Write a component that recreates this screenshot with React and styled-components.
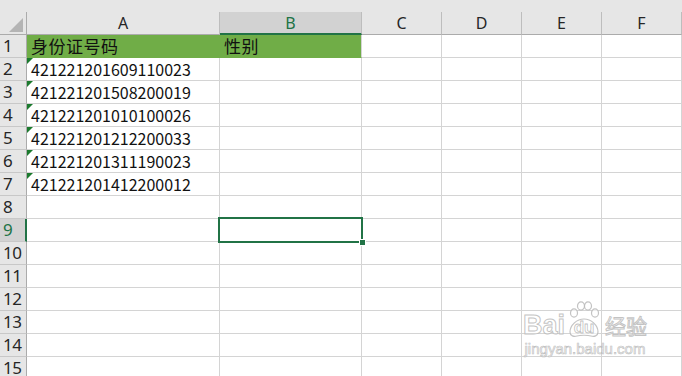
import React from "react";
import styled, { createGlobalStyle } from "styled-components";

const Global = createGlobalStyle`
  html, body { margin: 0; padding: 0; background: #fff; overflow: hidden; }
  * { box-sizing: border-box; }
`;

const COLS = [193, 142, 80, 80, 80, 80];
const LETTERS = ["A", "B", "C", "D", "E", "F"];

const Sheet = styled.div`
  position: relative;
  width: 682px;
  height: 376px;
  overflow: hidden;
  background: #fff;
  font-family: "Noto Sans CJK SC", "Noto Sans", sans-serif;
`;

const TopStrip = styled.div`
  height: 12px;
  background: #e6e6e6;
`;

const Grid = styled.div`
  display: grid;
  grid-template-columns: 27px ${COLS.map((c) => c + "px").join(" ")};
  grid-auto-rows: 23px;
`;

const Corner = styled.div`
  background: #e6e6e6;
  border-right: 1px solid #ababab;
  border-bottom: 1px solid #ababab;
  display: flex;
  align-items: flex-end;
  justify-content: flex-end;
  padding: 0 3px 2px 0;
`;

const ColHead = styled.div`
  background: ${(p) => (p.$active ? "#d2d2d2" : "#e6e6e6")};
  border-right: 1px solid #bdbdbd;
  border-bottom: ${(p) => (p.$active ? "2px solid #217346" : "1px solid #ababab")};
  color: ${(p) => (p.$active ? "#217346" : "#262626")};
  font-family: "Noto Sans", sans-serif;
  font-size: 16px;
  display: flex;
  align-items: center;
  justify-content: center;
  padding-top: ${(p) => (p.$active ? "1px" : "0")};
`;

const RowHead = styled.div`
  background: ${(p) => (p.$active ? "#d2d2d2" : "#e6e6e6")};
  border-right: ${(p) => (p.$active ? "2px solid #217346" : "1px solid #ababab")};
  border-bottom: 1px solid #c8c8c8;
  color: ${(p) => (p.$active ? "#217346" : "#262626")};
  font-family: "Noto Sans", sans-serif;
  font-size: 17px;
  line-height: 22px;
  padding-left: 3px;
  letter-spacing: -0.5px;
  white-space: nowrap;
  overflow: hidden;
`;

const Cell = styled.div`
  position: relative;
  background: ${(p) => (p.$fill ? "#70ad47" : "#fff")};
  border-right: 1px solid ${(p) => (p.$fill && !p.$lastFill ? "#70ad47" : "#d4d4d4")};
  border-bottom: 1px solid ${(p) => (p.$fill ? "#70ad47" : "#d4d4d4")};
  color: #111;
  font-size: 16px;
  line-height: 22px;
  padding-left: 4px;
  white-space: nowrap;
  z-index: ${(p) => (p.$selected ? 2 : 0)};
`;

const Marker = styled.span`
  position: absolute;
  left: 0;
  top: 0;
  width: 0;
  height: 0;
  border-top: 6px solid #1b7a2e;
  border-right: 6px solid transparent;
`;

const SelBox = styled.span`
  position: absolute;
  left: -2px;
  top: -2px;
  right: -2px;
  bottom: -2px;
  border: 2px solid #217346;
  pointer-events: none;
`;

const Handle = styled.span`
  position: absolute;
  right: -5px;
  bottom: -5px;
  width: 7px;
  height: 7px;
  background: #217346;
  border: 1px solid #fff;
`;

const CJK = styled.span`
  font-size: 17px;
  letter-spacing: 0.5px;
  color: #111;
`;

const Watermark = styled.div`
  position: absolute;
  left: 522px;
  top: 300px;
  width: 126px;
  display: flex;
  flex-direction: column;
  align-items: center;
  pointer-events: none;
  color: rgba(255, 255, 255, 0.65);
  -webkit-text-stroke: 1px rgba(185, 185, 185, 0.85);
`;

const WmTop = styled.div`
  display: flex;
  align-items: flex-end;
  font-family: "Liberation Sans", sans-serif;
  font-size: 27px;
  font-weight: bold;
  line-height: 26px;
`;

const PawWrap = styled.span`
  position: relative;
  width: 36px;
  height: 38px;
  margin: 0 1px;
  display: flex;
  align-items: flex-end;
  justify-content: center;
`;

const PawText = styled.span`
  position: absolute;
  left: 0;
  right: 0;
  bottom: 2px;
  text-align: center;
  font-size: 17px;
  line-height: 17px;
  -webkit-text-stroke: 0.8px rgba(185, 185, 185, 0.9);
`;

const WmCJK = styled.span`
  font-family: "Noto Sans CJK SC", sans-serif;
  font-weight: normal;
  font-size: 21px;
  line-height: 26px;
  margin-left: 2px;
`;

const WmUrl = styled.div`
  font-family: "Liberation Sans", sans-serif;
  font-size: 15px;
  line-height: 18px;
  margin-top: 2px;
  -webkit-text-stroke: 0.7px rgba(185, 185, 185, 0.9);
`;

const ids = [
  "421221201609110023",
  "421221201508200019",
  "421221201010100026",
  "421221201212200033",
  "421221201311190023",
  "421221201412200012",
];

function Paw() {
  return (
    <PawWrap>
      <svg width="36" height="38" viewBox="0 0 36 38" fill="rgba(255,255,255,0.6)" stroke="rgba(185,185,185,0.85)" strokeWidth="1.2">
        <ellipse cx="8" cy="13" rx="3.5" ry="4.2" />
        <ellipse cx="15" cy="6" rx="3.5" ry="4.2" />
        <ellipse cx="22" cy="6" rx="3.5" ry="4.2" />
        <ellipse cx="29" cy="13" rx="3.5" ry="4.2" />
        <path d="M4 32c0-7 7-13 14-13s14 6 14 13c0 4-4 5-7 4-3-1-11-1-14 0-3 1-7 0-7-4z" />
      </svg>
      <PawText>du</PawText>
    </PawWrap>
  );
}

export default function App() {
  const rows = [];
  for (let r = 1; r <= 15; r++) {
    const active = r === 9;
    rows.push(
      <RowHead key={"h" + r} $active={active}>{r}</RowHead>
    );
    LETTERS.forEach((l, ci) => {
      let content = null;
      const fill = r === 1 && ci < 2;
      if (r === 1 && ci === 0) content = <CJK>身份证号码</CJK>;
      if (r === 1 && ci === 1) content = <CJK>性别</CJK>;
      const isId = ci === 0 && r >= 2 && r <= 7;
      const sel = r === 9 && ci === 1;
      rows.push(
        <Cell key={l + r} $fill={fill} $lastFill={fill && ci === 1} $selected={sel}>
          {isId && <Marker />}
          {isId ? ids[r - 2] : content}
          {sel && (
            <SelBox>
              <Handle />
            </SelBox>
          )}
        </Cell>
      );
    });
  }

  return (
    <Sheet>
      <Global />
      <TopStrip />
      <Grid>
        <Corner>
          <svg width="14" height="14" viewBox="0 0 14 14">
            <polygon points="14,0 14,14 0,14" fill="#b4b4b4" />
          </svg>
        </Corner>
        {LETTERS.map((l) => (
          <ColHead key={l} $active={l === "B"}>{l}</ColHead>
        ))}
        {rows}
      </Grid>
      <Watermark>
        <WmTop>
          <span>Bai</span>
          <Paw />
          <WmCJK>经验</WmCJK>
        </WmTop>
        <WmUrl>jingyan.baidu.com</WmUrl>
      </Watermark>
    </Sheet>
  );
}
